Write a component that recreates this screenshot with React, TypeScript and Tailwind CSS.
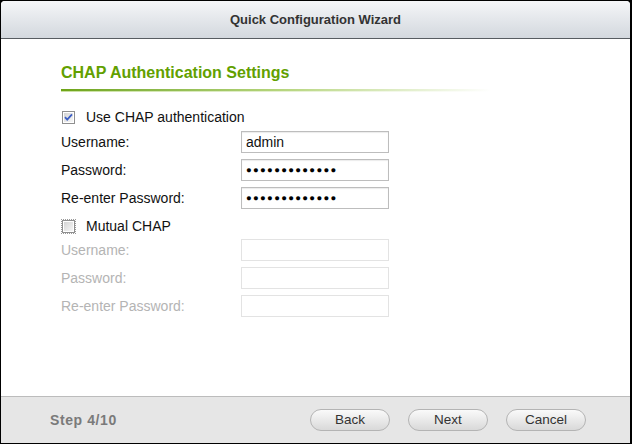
import React from 'react';

const FONT = { fontFamily: '"Liberation Sans", Arial, sans-serif' };

function CheckBox({ checked, focus }: { checked?: boolean; focus?: boolean }) {
  return (
    <div className={`w-[13px] h-[13px] flex items-center justify-center ${focus ? 'outline-1 outline-dotted outline-[#9a9a9a]' : ''}`}>
      <svg width="13" height="13" viewBox="0 0 13 13">
        <defs>
          <linearGradient id={checked ? 'cbg1' : 'cbg2'} x1="0" y1="0" x2="1" y2="1">
            <stop offset="0" stopColor="#d4d4d4" />
            <stop offset="1" stopColor="#f7f7f7" />
          </linearGradient>
        </defs>
        <rect x="0.5" y="0.5" width="12" height="12" fill="#fff" stroke="#8f8f8f" />
        <rect x="2" y="2" width="9" height="9" fill={`url(#${checked ? 'cbg1' : 'cbg2'})`} />
        {checked && (
          <path d="M3 6.2 L5.2 8.6 L10 3.4" fill="none" stroke="#3d5fc4" strokeWidth="1.8" />
        )}
      </svg>
    </div>
  );
}

function Row({ label, value, masked, disabled }: { label: string; value?: string; masked?: boolean; disabled?: boolean }) {
  return (
    <div className="flex items-center h-[22px]">
      <div className={`w-[180px] text-[14px] ${disabled ? 'text-[#b4b4b4]' : 'text-[#111]'}`}>{label}</div>
      <div
        className={`w-[148px] h-[22px] flex items-center pl-[4px] bg-white border ${
          disabled ? 'border-[#e3e3e3]' : 'border-[#bdbdbd] shadow-[inset_0_1px_1px_rgba(0,0,0,0.08)]'
        }`}
      >
        {masked ? (
          <span className="text-[9.5px] tracking-[1.3px] text-black leading-none">{value}</span>
        ) : (
          <span className="text-[14px] text-[#111]">{value}</span>
        )}
      </div>
    </div>
  );
}

function Btn({ children }: { children: React.ReactNode }) {
  return (
    <button className="w-[80px] h-[22px] rounded-full border border-[#b4b4b4] bg-gradient-to-b from-[#fafafa] to-[#d9d9d9] text-[13.5px] text-[#333]">
      {children}
    </button>
  );
}

export default function App() {
  const dots = '●●●●●●●●●●●●●';
  return (
    <div className="w-[632px] h-[444px] bg-black pt-[1px] pl-[1px] pr-[2px] pb-[1px]" style={FONT}>
      <div className="w-full h-full flex flex-col bg-white rounded-t-[4px] overflow-hidden">
        {/* Title bar */}
        <div className="h-[38px] shrink-0 flex items-center justify-center bg-gradient-to-b from-[#f5f6f8] to-[#d3d8de] border-b border-[#575c61]">
          <span className="text-[13px] font-bold text-[#333]">Quick Configuration Wizard</span>
        </div>

        {/* Body */}
        <div className="flex-1 pl-[60px]">
          <div className="mt-[24px] h-[20px] flex items-center text-[16px] font-bold text-[#62a000]">
            CHAP Authentication Settings
          </div>
          <div className="mt-[6px] w-[430px]">
            <div className="h-[2px] bg-gradient-to-r from-[#6ea415] via-[#b4d47a] to-transparent" />
            <div className="h-[1px] bg-gradient-to-r from-[#c9e0a0] to-transparent" />
          </div>

          <div className="mt-[13px] h-[24px] flex items-center gap-[11px] pl-[1px]">
            <CheckBox checked />
            <span className="text-[14px] text-[#111]">Use CHAP authentication</span>
          </div>
          <div className="mt-[2px] flex flex-col gap-[6px]">
            <Row label="Username:" value="admin" />
            <Row label="Password:" value={dots} masked />
            <Row label="Re-enter Password:" value={dots} masked />
          </div>

          <div className="mt-[5px] h-[24px] flex items-center gap-[11px] pl-[1px]">
            <CheckBox focus />
            <span className="text-[14px] text-[#111]">Mutual CHAP</span>
          </div>
          <div className="mt-[1px] flex flex-col gap-[6px]">
            <Row label="Username:" disabled />
            <Row label="Password:" disabled />
            <Row label="Re-enter Password:" disabled />
          </div>
        </div>

        {/* Footer */}
        <div className="h-[47px] shrink-0 flex items-center bg-[#e6e6e6] border-t border-[#bcbcbc] pl-[49px] pr-[44px]">
          <span className="text-[14px] tracking-[0.6px] font-bold text-[#7a7a7a]">Step 4/10</span>
          <div className="ml-auto flex gap-[18px]">
            <Btn>Back</Btn>
            <Btn>Next</Btn>
            <Btn>Cancel</Btn>
          </div>
        </div>
      </div>
    </div>
  );
}
